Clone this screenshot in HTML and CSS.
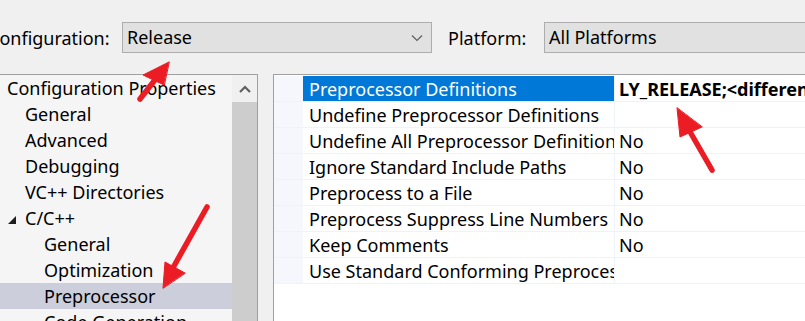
FILE: index.html
```html
<!DOCTYPE html>
<html>
<head>
<meta charset="utf-8">
<link rel="stylesheet" href="styles.css">
</head>
<body>

  <div class="toolbar">
    <span class="label label-config">Configuration:</span>
    <div class="combo combo-config">
      <span>Release</span>
      <svg class="chev" width="12" height="8" viewBox="0 0 12 8"><path d="M1 1.5 L6 6.5 L11 1.5" fill="none" stroke="#606060" stroke-width="1.2"/></svg>
    </div>
    <span class="label label-platform">Platform:</span>
    <div class="combo combo-platform"><span>All Platforms</span></div>
  </div>

  <div class="main">
    <div class="tree">
      <ul class="tree-list">
        <li class="lvl0">Configuration Properties</li>
        <li class="lvl1">General</li>
        <li class="lvl1">Advanced</li>
        <li class="lvl1">Debugging</li>
        <li class="lvl1">VC++ Directories</li>
        <li class="lvl1 expanded"><svg class="tri" width="8" height="8" viewBox="0 0 8 8"><polygon points="0,8 8,8 8,0" fill="#1e1e1e"/></svg>C/C++</li>
        <li class="lvl2">General</li>
        <li class="lvl2">Optimization</li>
        <li class="lvl2 selected">Preprocessor</li>
        <li class="lvl2">Code Generation</li>
      </ul>
      <div class="scrollbar">
        <div class="scroll-up"><svg width="12" height="8" viewBox="0 0 12 8"><path d="M1 7 L6 2 L11 7" fill="none" stroke="#606060" stroke-width="2.2"/></svg></div>
        <div class="thumb"></div>
      </div>
    </div>

    <div class="grid">
      <div class="row selected"><div class="gutter"></div><div class="name">Preprocessor Definitions</div><div class="value bold">LY_RELEASE;&lt;different options&gt;</div></div>
      <div class="row"><div class="gutter"></div><div class="name">Undefine Preprocessor Definitions</div><div class="value"></div></div>
      <div class="row"><div class="gutter"></div><div class="name">Undefine All Preprocessor Definitions</div><div class="value">No</div></div>
      <div class="row"><div class="gutter"></div><div class="name">Ignore Standard Include Paths</div><div class="value">No</div></div>
      <div class="row"><div class="gutter"></div><div class="name">Preprocess to a File</div><div class="value">No</div></div>
      <div class="row"><div class="gutter"></div><div class="name">Preprocess Suppress Line Numbers</div><div class="value">No</div></div>
      <div class="row"><div class="gutter"></div><div class="name">Keep Comments</div><div class="value">No</div></div>
      <div class="row"><div class="gutter"></div><div class="name">Use Standard Conforming Preprocessor</div><div class="value"></div></div>
    </div>
  </div>

  <!-- red annotation arrows drawn over the screenshot -->
  <svg class="marks" width="805" height="321" viewBox="0 0 805 321">
    <g fill="#ec1c24" stroke="#ec1c24" stroke-linecap="round" stroke-linejoin="round">
      <line x1="140" y1="99" x2="158" y2="76" stroke-width="5.5"/>
      <polygon points="169,62 143,75 164,85" stroke-width="1"/>
      <line x1="207" y1="207" x2="174" y2="266" stroke-width="5.5"/>
      <polygon points="163,288 165,262 185,273" stroke-width="1"/>
      <line x1="712" y1="170" x2="689" y2="130" stroke-width="5.5"/>
      <polygon points="677,108 680,137 702,127" stroke-width="1"/>
    </g>
  </svg>

</body>
</html>
```

FILE: styles.css
```css
html, body {margin: 0; padding: 0; width: 805px; height: 321px; overflow: hidden;}
body {
  background: #f0f0f0; color: #000; position: relative;
  font: 18px/26px "Noto Sans", "Open Sans", sans-serif;
}
ul {margin: 0; padding: 0; list-style: none;}

/*toolbar*/
.toolbar {display: flex; align-items: center; height: 74px; padding-top: 1px; box-sizing: border-box; white-space: nowrap;}
.label-config {margin-left: -12px; width: 134px;}
.label-platform {margin-left: 16px; width: 96px;}
.combo {
  height: 31px; box-sizing: border-box; border: 1px solid #adadad; background: #e1e1e1;
  display: flex; align-items: center; padding-left: 4px; line-height: 29px;
}
.combo-config {width: 310px; justify-content: space-between; padding-right: 8px;}
.combo-platform {flex: 1; margin-right: -20px;}
.chev {display: block;}

.main {display: flex; align-items: flex-start; gap: 15px; height: 247px;}

/*tree*/
.tree {
  width: 260px; height: 260px; margin-left: -1px; box-sizing: border-box;
  border: 1px solid #a0a0a0; background: #f5f5f5; display: flex;
}
.tree-list {width: 232px;}
.tree-list li {height: 26px; white-space: nowrap;}
.lvl0 {padding-left: 7px;}
.lvl1 {padding-left: 25px;}
.lvl2 {padding-left: 44px;}
.expanded {padding-left: 8px; display: flex; align-items: center;}
.tri {margin: 4px 9px 0 0;}
.tree-list .selected {background: #cccedb;}

.scrollbar {width: 25px; background: #f0f0f0; display: flex; flex-direction: column;}
.scroll-up {height: 27px; display: flex; align-items: center; justify-content: center;}
.thumb {flex: 1; background: #cdcdcd;}

/*property grid*/
.grid {
  flex: 1; height: 260px; margin-right: -20px; box-sizing: border-box;
  border: 1px solid #a0a0a0; background: #fff; padding-top: 1px;
}
.row {display: flex; height: 26px; box-sizing: border-box; border-bottom: 1px solid #eef2f9; white-space: nowrap;}
.gutter {width: 29px; background: #f5f7fc;}
.name {width: 312px; padding-left: 6px; box-sizing: border-box; overflow: hidden; border-right: 1px solid #eef2f9;}
.value {flex: 1; padding-left: 4px; overflow: hidden;}
.bold {font-weight: bold;}
.row.selected .name {background: #0078d7; color: #fff;}

.marks {position: absolute; left: 0; top: 0;}
```
